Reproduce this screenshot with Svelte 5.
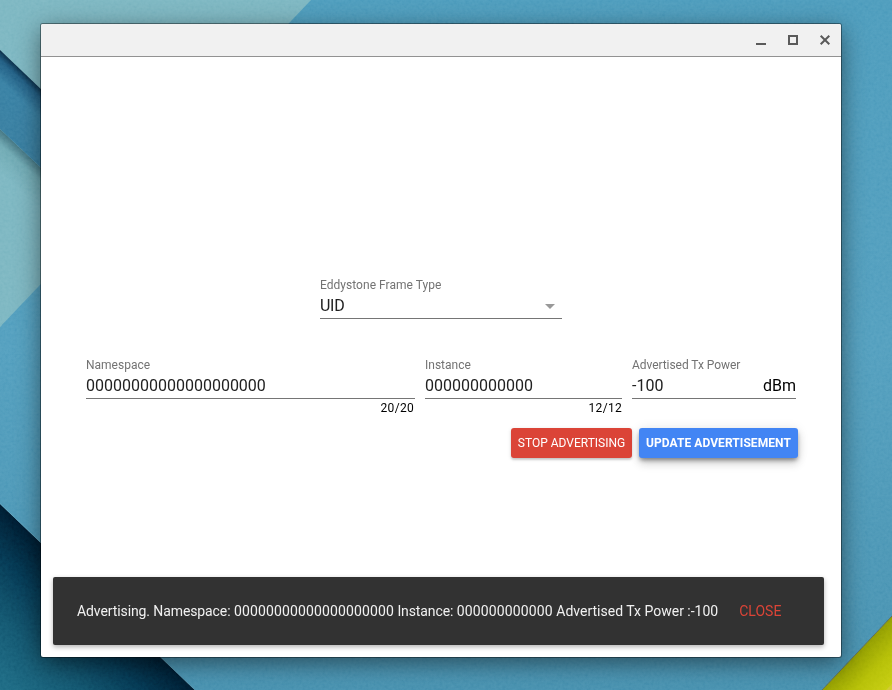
<script>
  let namespace = $state('00000000000000000000');
  let instance = $state('000000000000');
  let power = $state('-100');
</script>

<main class="desktop">
  <svg class="wallpaper" viewBox="0 0 892 690" aria-hidden="true">
    <defs>
      <linearGradient id="sky" x1="0" y1="0" x2="0" y2="1">
        <stop offset="0" stop-color="#4a9abb" />
        <stop offset=".5" stop-color="#509dbd" />
        <stop offset="1" stop-color="#448fae" />
      </linearGradient>
      <linearGradient id="band" gradientUnits="userSpaceOnUse" x1="35" y1="82" x2="0" y2="119">
        <stop offset="0" stop-color="#07243d" />
        <stop offset=".15" stop-color="#1e5a80" />
        <stop offset=".45" stop-color="#357ea2" />
        <stop offset="1" stop-color="#357c9f" />
      </linearGradient>
      <linearGradient id="teal" gradientUnits="userSpaceOnUse" x1="20" y1="147" x2="-2" y2="171">
        <stop offset="0" stop-color="#3d6f7c" />
        <stop offset=".35" stop-color="#6ca7b1" />
        <stop offset="1" stop-color="#7ab5c0" />
      </linearGradient>
      <linearGradient id="deep" gradientUnits="userSpaceOnUse" x1="100" y1="599" x2="14" y2="690">
        <stop offset="0" stop-color="#00182c" />
        <stop offset=".3" stop-color="#053550" />
        <stop offset=".65" stop-color="#11536d" />
        <stop offset="1" stop-color="#1a6680" />
      </linearGradient>
      <linearGradient id="lime" gradientUnits="userSpaceOnUse" x1="857" y1="653" x2="892" y2="687">
        <stop offset="0" stop-color="#8f9b02" />
        <stop offset=".5" stop-color="#b4be07" />
        <stop offset="1" stop-color="#c6ce10" />
      </linearGradient>
      <filter id="grain" x="0" y="0" width="100%" height="100%">
        <feTurbulence type="fractalNoise" baseFrequency=".35" numOctaves="2" seed="4" />
        <feColorMatrix type="saturate" values="0" />
        <feComponentTransfer><feFuncA type="linear" slope="0" intercept="1" /></feComponentTransfer>
      </filter>
    </defs>
    <rect width="892" height="690" fill="url(#sky)" />
    <path d="M0 0H311L0 327Z" fill="#7ab5c0" />
    <path d="M0 129L90 214L0 327Z" fill="url(#teal)" />
    <path d="M0 50L90 136V214L0 129Z" fill="url(#band)" />
    <path d="M0 504L195 690H0Z" fill="url(#deep)" />
    <path d="M0 503.500L195 690" stroke="#6cafc7" stroke-opacity=".6" fill="none" />
    <path d="M822 690L892 616V690Z" fill="url(#lime)" />
    <path d="M822 690L892 616" stroke="#596b55" fill="none" />
    <path d="M886 690L892 684V690Z" fill="#d0c92f" />
    <rect class="grain" width="892" height="690" filter="url(#grain)" />
  </svg>

  <section class="window">
    <header>
      <button aria-label="Minimize"><svg viewBox="0 0 12 12"><path d="M1 9h10v2H1z" /></svg></button>
      <button aria-label="Maximize"><svg viewBox="0 0 12 12"><path fill-rule="evenodd" d="M1 1h10v10H1zM3 3v6h6V3z" /></svg></button>
      <button aria-label="Close"><svg viewBox="0 0 12 12"><path d="M1.700 1.700l8.600 8.600M10.300 1.700l-8.600 8.600" stroke="#5a5a5a" stroke-width="2" /></svg></button>
    </header>

    <div class="content">
      <div class="field frame">
        <span class="label">Eddystone Frame Type</span>
        <div class="value"><span class="type">UID</span><i class="arrow"></i></div>
      </div>

      <div class="row">
        <div class="field namespace">
          <span class="label">Namespace</span>
          <div class="value">{namespace}</div>
          <span class="counter">{namespace.length}/20</span>
        </div>
        <div class="field instance">
          <span class="label">Instance</span>
          <div class="value">{instance}</div>
          <span class="counter">{instance.length}/12</span>
        </div>
        <div class="field power">
          <span class="label">Advertised Tx Power</span>
          <div class="value"><span>{power}</span><span class="unit">dBm</span></div>
        </div>
      </div>

      <div class="actions">
        <button class="stop">STOP ADVERTISING</button>
        <button class="update">UPDATE ADVERTISEMENT</button>
      </div>

      <div class="toast">
        <span><span class="lead">Advertising. Namespace:</span> <span class="digits">{namespace}</span> <span class="lead">Instance:</span> <span class="digits">{instance}</span> Advertised Tx Power :{power}</span>
        <button>CLOSE</button>
      </div>
    </div>
  </section>
</main>

<style>
  .desktop {
    position: relative;
    box-sizing: border-box;
    width: 892px;
    height: 690px;
    padding: 24px 51px 33px 41px;
    overflow: hidden;
    font-family: Roboto, "Liberation Sans", sans-serif;
  }
  .wallpaper { position: absolute; inset: 0; width: 892px; height: 690px; }
  .grain { opacity: .25; mix-blend-mode: soft-light; }
  button { border: 0; padding: 0; background: none; font: inherit; }
  .window {
    position: relative;
    display: flex;
    flex-direction: column;
    width: 800px;
    height: 633px;
    border-radius: 2px;
    background: #fff;
    box-shadow: 0 0 0 1px rgba(0, 0, 0, .38), 0 6px 24px rgba(0, 0, 0, .5);
  }
  header {
    display: flex;
    justify-content: flex-end;
    height: 32px;
    border-bottom: 1px solid #929292;
    border-radius: 2px 2px 0 0;
    background: #f1f1f1;
  }
  header button { display: grid; place-items: center; width: 32px; height: 32px; }
  header svg { width: 12px; height: 12px; fill: #5a5a5a; }
  .content { display: flex; flex: 1; flex-direction: column; padding: 217px 17px 12px 12px; }
  .field { display: flex; flex-direction: column; }
  .label { height: 20px; color: #737373; font-size: 12px; line-height: 23px; }
  .value {
    display: flex;
    justify-content: space-between;
    height: 24px;
    border-bottom: 1px solid #757575;
    color: #212121;
    font-size: 16px;
    line-height: 24px;
  }
  .type { letter-spacing: -.3px; }
  .unit { color: #000; }
  .counter { height: 20px; color: #000; font-size: 12px; line-height: 18px; letter-spacing: .3px; text-align: right; }
  .namespace .counter { padding-right: 1px; }
  .frame { width: 242px; margin-left: 267px; }
  .frame .label { letter-spacing: .03px; }
  .power .label { letter-spacing: -.06px; }
  .arrow {
    width: 0;
    height: 0;
    margin: 10px 7px 0 0;
    border: 5px solid transparent;
    border-top-color: #999;
    border-bottom: 0;
  }
  .row { display: flex; gap: 10px; height: 65px; margin: 35px 0 0 33px; }
  .namespace { width: 329px; }
  .instance { width: 197px; }
  .power { width: 164px; }
  .actions { display: flex; justify-content: flex-end; gap: 7px; margin: 9px 26px 0 0; }
  .actions button { height: 30px; border-radius: 3px; color: #fff; font-size: 12px; line-height: 30px; white-space: nowrap; }
  .actions .stop {
    width: 121px;
    background: #db4437;
    box-shadow: 0 2px 2px rgba(0, 0, 0, .14), 0 1px 4px rgba(0, 0, 0, .12), 0 2px 1px -2px rgba(0, 0, 0, .2);
  }
  .actions .update {
    width: 159px;
    background: #4285f4;
    font-weight: 700;
    letter-spacing: .06px;
    box-shadow: 0 6px 10px rgba(0, 0, 0, .14), 0 1px 12px rgba(0, 0, 0, .1), 0 3px 4px -1px rgba(0, 0, 0, .4);
  }
  .toast {
    display: flex;
    align-items: center;
    height: 68px;
    margin-top: auto;
    padding-left: 24px;
    border-radius: 2px;
    background: #323232;
    box-shadow: 0 2px 5px rgba(0, 0, 0, .3);
    color: #f1f1f1;
    font-size: 14px;
    white-space: nowrap;
  }
  .lead { letter-spacing: -.1px; }
  .digits { letter-spacing: .13px; }
  .toast button { margin-left: 21px; color: #db4437; }
</style>
